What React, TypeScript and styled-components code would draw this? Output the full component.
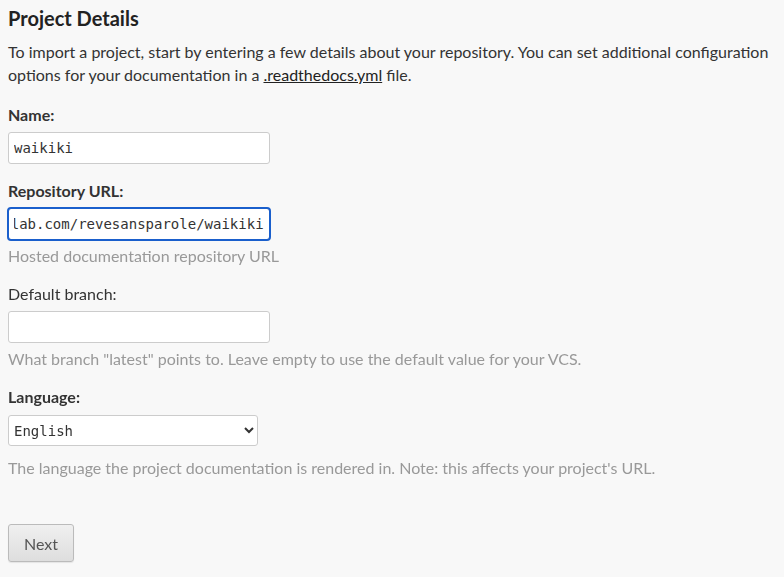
import React, { useEffect, useRef } from "react";
import styled, { createGlobalStyle } from "styled-components";

const GlobalStyle = createGlobalStyle`
  html, body {
    margin: 0;
    padding: 0;
    background: #f8f8f8;
  }
  body {
    font-family: Lato, "Open Sans", sans-serif;
    color: #333;
  }
`;

const Page = styled.div`
  padding: 4px 8px 14px 8px;
  display: flex;
  flex-direction: column;
`;

const Title = styled.h2`
  margin: 0;
  font-size: 20px;
  font-weight: 700;
  color: #222;
  line-height: 28px;
`;

const Intro = styled.p`
  margin: 8px 0 0 0;
  font-size: 16px;
  line-height: 23px;
  color: #333;

  a {
    color: #222;
    text-decoration: underline;
  }
`;

const Field = styled.div<{ $first?: boolean }>`
  display: flex;
  flex-direction: column;
  margin-top: ${(p) => (p.$first ? "18px" : "16px")};
`;

const Label = styled.label<{ $bold?: boolean }>`
  font-size: 16px;
  line-height: 22px;
  font-weight: ${(p) => (p.$bold ? 700 : 400)};
  color: #333;
  margin-bottom: 6px;
`;

const TextInput = styled.input<{ $focused?: boolean }>`
  box-sizing: border-box;
  width: 262px;
  height: 32px;
  padding: 0 5px;
  font-family: "DejaVu Sans Mono", "Liberation Mono", monospace;
  font-size: 14px;
  color: #333;
  background: #fff;
  border: 1px solid #ccc;
  border-radius: 3px;
  outline: ${(p) => (p.$focused ? "2px solid #1a5fcc" : "none")};
  outline-offset: -1px;
`;

const Select = styled.select`
  box-sizing: border-box;
  width: 250px;
  height: 31px;
  margin-top: 1px;
  padding: 0 1px;
  font-family: "DejaVu Sans Mono", "Liberation Mono", monospace;
  font-size: 14px;
  color: #333;
  background: #fff;
  border: 1px solid #ccc;
  border-radius: 3px;
  margin-bottom: 6px;
`;

const Help = styled.div`
  font-size: 16px;
  line-height: 23px;
  color: #999;
  margin-top: 4px;
`;

const Button = styled.button`
  margin-top: 45px;
  align-self: flex-start;
  width: 66px;
  height: 38px;
  font-family: Lato, sans-serif;
  font-size: 16px;
  color: #555;
  border: 1px solid #bbb;
  border-radius: 3px;
  background: linear-gradient(#f0f0f0, #dedede);
  box-shadow: 0 1px 1px rgba(0, 0, 0, 0.08);
  cursor: pointer;
`;

export default function App() {
  const urlRef = useRef<HTMLInputElement>(null);

  useEffect(() => {
    const el = urlRef.current;
    if (el) {
      el.focus();
      const n = el.value.length;
      el.setSelectionRange(n, n);
      el.scrollLeft = el.scrollWidth;
    }
  }, []);

  return (
    <>
      <GlobalStyle />
      <Page>
        <Title>Project Details</Title>
        <Intro>
          To import a project, start by entering a few details about your
          repository. You can set additional configuration options for your
          documentation in a <a href="#">.readthedocs.yml</a> file.
        </Intro>

        <Field $first>
          <Label $bold>Name:</Label>
          <TextInput defaultValue="waikiki" />
        </Field>

        <Field>
          <Label $bold>Repository URL:</Label>
          <TextInput
            ref={urlRef}
            $focused
            defaultValue="https://gitlab.com/revesansparole/waikiki"
          />
          <Help>Hosted documentation repository URL</Help>
        </Field>

        <Field>
          <Label>Default branch:</Label>
          <TextInput defaultValue="" />
          <Help>
            What branch "latest" points to. Leave empty to use the default
            value for your VCS.
          </Help>
        </Field>

        <Field>
          <Label $bold>Language:</Label>
          <Select defaultValue="en">
            <option value="en">English</option>
            <option value="fr">French</option>
          </Select>
          <Help>
            The language the project documentation is rendered in. Note: this
            affects your project's URL.
          </Help>
        </Field>

        <Button>Next</Button>
      </Page>
    </>
  );
}
